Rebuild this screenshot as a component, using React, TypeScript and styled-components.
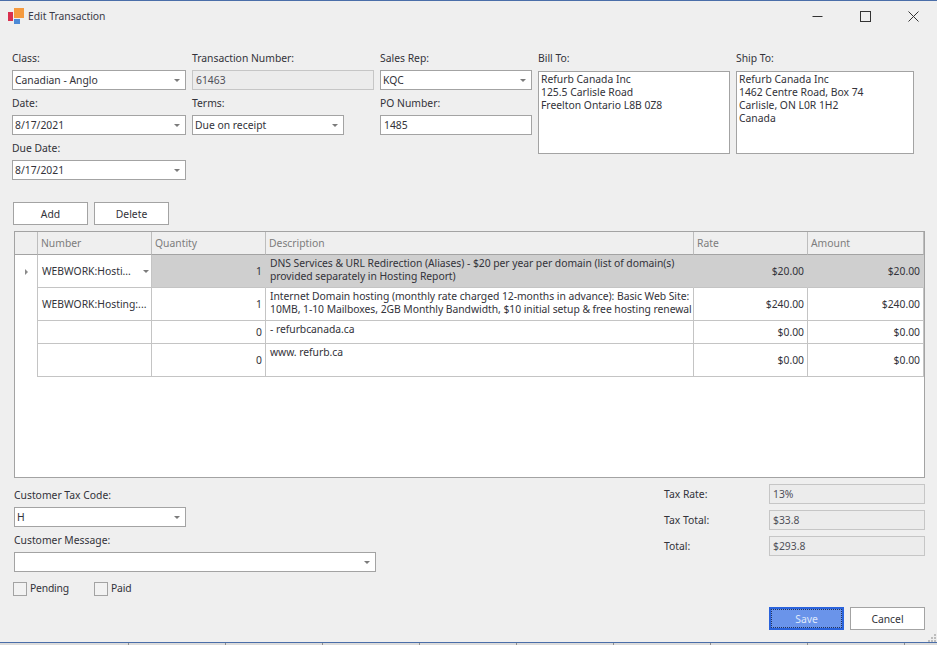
import React from "react";
import styled, { createGlobalStyle } from "styled-components";

const Global = createGlobalStyle`
  html, body { margin: 0; padding: 0; background: #efefef; }
  * { box-sizing: border-box; }
`;

const Window = styled.div`
  width: 937px;
  height: 645px;
  overflow: hidden;
  display: flex;
  flex-direction: column;
  position: relative;
  background: #efefef;
  border-top: 1px solid #4a6ea9;
  font-family: "Noto Sans", Tahoma, sans-serif;
  font-size: 10.35px;
  line-height: 13px;
  color: #33333a;
`;

const TitleBar = styled.header`
  height: 51px;
  display: flex;
  align-items: flex-start;
  padding: 7px 0 0 8px;
  flex: none;
`;

const Title = styled.span`
  margin: 2px 0 0 4px;
  color: #3a3a48;
  flex: 1;
`;

const WinButton = styled.button`
  width: 48px;
  height: 16px;
  padding: 0;
  border: 0;
  background: none;
  display: flex;
  align-items: center;
  justify-content: center;
`;

const WinControls = styled.div`
  display: flex;
`;

const FormRow = styled.section`
  display: flex;
  gap: 6px;
  padding-left: 12px;
  height: 150px;
  flex: none;
`;

const Column = styled.div<{ $w: number }>`
  width: ${(p) => p.$w}px;
  display: flex;
  flex-direction: column;
  gap: 7px;
  flex: none;
`;

const Field = styled.div<{ $labelH?: number }>`
  display: flex;
  flex-direction: column;
  > label {
    height: ${(p) => p.$labelH ?? 18}px;
  }
`;

const FieldLabel = styled.label`
  display: block;
`;

const Combo = styled.div<{ $w?: number }>`
  height: 20px;
  width: ${(p) => (p.$w ? p.$w + "px" : "100%")};
  background: #fff;
  border: 1px solid #a3a3a3;
  display: flex;
  align-items: center;
  padding: 0 5px 0 2px;
  > span { flex: 1; white-space: nowrap; overflow: hidden; }
`;

const Arrow = styled.i`
  display: block;
  width: 0;
  height: 0;
  border-left: 3px solid transparent;
  border-right: 3px solid transparent;
  border-top: 3px solid #7b7b7b;
  flex: none;
`;

const TextBox = styled.div<{ $disabled?: boolean }>`
  height: 20px;
  width: 100%;
  background: ${(p) => (p.$disabled ? "#ececec" : "#fff")};
  border: 1px solid ${(p) => (p.$disabled ? "#c6c6c6" : "#a3a3a3")};
  display: flex;
  align-items: center;
  padding: 0 3px;
  color: ${(p) => (p.$disabled ? "#50505a" : "#33333a")};
`;

const Memo = styled.div`
  height: 83px;
  background: #fff;
  border: 1px solid #a3a3a3;
  padding: 1px 2px 0;
  white-space: pre-line;
`;

const ActionBar = styled.div`
  display: flex;
  gap: 6px;
  padding-left: 13px;
  flex: none;
  height: 29px;
`;

const Btn = styled.button`
  width: 75px;
  height: 23px;
  background: #fff;
  border: 1px solid #a3a3a3;
  font: inherit;
  color: #33333a;
  padding: 1px 0 0;
`;

const Grid = styled.div`
  margin-left: 14px;
  width: 911px;
  height: 247px;
  flex: none;
  background: #fff;
  border: 1px solid #a3a3a3;
  display: grid;
  grid-template-columns: 23px 114px 114px 428px 114px 116px;
  grid-template-rows: 23px 33px 33px 23px 33px;
  align-content: start;
`;

const HeadCell = styled.div`
  background: #efefef;
  border-right: 1px solid #bdbdbd;
  border-bottom: 1px solid #a3a3a3;
  color: #7d7d7d;
  display: flex;
  align-items: center;
  padding-left: 3px;
`;

const Indicator = styled.div`
  border-right: 1px solid #c4c4c4;
  display: flex;
  align-items: center;
  justify-content: center;
  background: #fff;
`;

const Caret = styled.i`
  display: block;
  width: 0;
  height: 0;
  border-top: 3px solid transparent;
  border-bottom: 3px solid transparent;
  border-left: 3px solid #8a8a8a;
`;

const Cell = styled.div<{ $sel?: boolean; $right?: boolean }>`
  background: ${(p) => (p.$sel ? "#cfcfcf" : "#fff")};
  border-right: 1px solid ${(p) => (p.$sel ? "#cfcfcf" : "#c4c4c4")};
  border-bottom: 1px solid #c4c4c4;
  padding: 0 ${(p) => (p.$right ? "3px" : "2px")} 0 4px;
  display: flex;
  align-items: center;
  justify-content: ${(p) => (p.$right ? "flex-end" : "flex-start")};
`;

const DescCell = styled(Cell)<{ $top?: boolean }>`
  white-space: pre;
  letter-spacing: -0.04px;
  align-items: ${(p) => (p.$top ? "flex-start" : "center")};
  padding-top: ${(p) => (p.$top ? "2px" : "0")};
  padding-bottom: ${(p) => (p.$top ? "0" : "2px")};
`;

const NumberText = styled.span`
  flex: 1;
  white-space: nowrap;
`;

const Bottom = styled.section`
  display: flex;
  justify-content: space-between;
  padding: 6px 12px 0 14px;
  height: 129px;
  flex: none;
`;

const LeftStack = styled.div`
  padding-top: 5px;
  display: flex;
  flex-direction: column;
  gap: 7px;
  width: 362px;
`;

const Checks = styled.div`
  display: flex;
  margin-top: 3px;
  margin-left: -1px;
`;

const Check = styled.label`
  width: 81px;
  display: flex;
  align-items: flex-start;
  gap: 3px;
  line-height: 12px;
  letter-spacing: -0.2px;
`;

const Box = styled.i`
  display: block;
  width: 14px;
  height: 14px;
  background: #f2f2f2;
  border: 1px solid #a3a3a3;
`;

const Totals = styled.div`
  display: flex;
  flex-direction: column;
  gap: 6px;
`;

const TotalRow = styled.div`
  display: flex;
  align-items: center;
  > label { width: 105px; }
  > div { width: 156px; }
`;

const Footer = styled.footer`
  display: flex;
  justify-content: flex-end;
  gap: 6px;
  padding-right: 12px;
  flex: none;
`;

const SaveBtn = styled(Btn)`
  background: #6a94ea;
  border: 2px solid #2a63dc;
  color: #dfe8fb;
  outline: 1px dotted #24345c;
  outline-offset: -3px;
`;

const Grip = styled.svg`
  position: absolute;
  right: 0;
  bottom: 2px;
`;

const BackStrip = styled.div`
  position: absolute;
  left: 0;
  right: 0;
  bottom: 0;
  height: 3px;
  border-top: 1px solid #4a6ea9;
  background-color: #dcdcdc;
  background-image: repeating-linear-gradient(
    to right,
    transparent 0,
    transparent 96px,
    #8f8f8f 96px,
    #8f8f8f 97px
  );
  background-position: 32px 0;
`;

const rows = [
  { n: "WEBWORK:Hosti...", q: "1", d: "DNS Services & URL Redirection (Aliases) - $20 per year per domain (list of domain(s)\nprovided separately in Hosting Report)", r: "$20.00", sel: true },
  { n: "WEBWORK:Hosting:...", q: "1", d: "Internet Domain hosting (monthly rate charged 12-months in advance): Basic Web Site:\n10MB, 1-10 Mailboxes, 2GB Monthly Bandwidth, $10 initial setup & free hosting renewal", r: "$240.00" },
  { n: "", q: "0", d: "- refurbcanada.ca", r: "$0.00", top: true },
  { n: "", q: "0", d: "www. refurb.ca", r: "$0.00", top: true },
];

export default function App() {
  return (
    <Window>
      <Global />
      <TitleBar>
        <svg width="16" height="16" viewBox="0 0 16 16" style={{ flex: "none" }}>
          <rect x="0" y="4" width="5" height="9" fill="#d9304f" />
          <rect x="6" y="0" width="10" height="10" fill="#f59a3e" />
          <rect x="6" y="11" width="6" height="5" fill="#4d8ad6" />
        </svg>
        <Title>Edit Transaction</Title>
        <WinControls>
          <WinButton aria-label="Minimize">
            <svg width="11" height="11" viewBox="0 0 11 11"><path d="M0.5 5.5h10" stroke="#333" fill="none" /></svg>
          </WinButton>
          <WinButton aria-label="Maximize">
            <svg width="11" height="11" viewBox="0 0 11 11"><rect x="0.5" y="0.5" width="10" height="10" stroke="#333" fill="none" /></svg>
          </WinButton>
          <WinButton aria-label="Close">
            <svg width="11" height="11" viewBox="0 0 11 11"><path d="M0.5 0.5l10 10M10.5 0.5l-10 10" stroke="#333" fill="none" /></svg>
          </WinButton>
        </WinControls>
      </TitleBar>

      <FormRow>
        <Column $w={174}>
          <Field><FieldLabel>Class:</FieldLabel><Combo><span>Canadian - Anglo</span><Arrow /></Combo></Field>
          <Field><FieldLabel>Date:</FieldLabel><Combo><span>8/17/2021</span><Arrow /></Combo></Field>
          <Field><FieldLabel>Due Date:</FieldLabel><Combo><span>8/17/2021</span><Arrow /></Combo></Field>
        </Column>
        <Column $w={182}>
          <Field><FieldLabel>Transaction Number:</FieldLabel><TextBox $disabled>61463</TextBox></Field>
          <Field><FieldLabel>Terms:</FieldLabel><Combo $w={152}><span>Due on receipt</span><Arrow /></Combo></Field>
        </Column>
        <Column $w={152}>
          <Field><FieldLabel>Sales Rep:</FieldLabel><Combo><span>KQC</span><Arrow /></Combo></Field>
          <Field><FieldLabel>PO Number:</FieldLabel><TextBox>1485</TextBox></Field>
        </Column>
        <Column $w={192}>
          <Field $labelH={19}><FieldLabel>Bill To:</FieldLabel><Memo>{"Refurb Canada Inc\n125.5 Carlisle Road\nFreelton Ontario L8B 0Z8"}</Memo></Field>
        </Column>
        <Column $w={178}>
          <Field $labelH={19}><FieldLabel>Ship To:</FieldLabel><Memo>{"Refurb Canada Inc\n1462 Centre Road, Box 74\nCarlisle, ON L0R 1H2\nCanada"}</Memo></Field>
        </Column>
      </FormRow>

      <ActionBar>
        <Btn>Add</Btn>
        <Btn>Delete</Btn>
      </ActionBar>

      <Grid>
        <HeadCell />
        <HeadCell>Number</HeadCell>
        <HeadCell>Quantity</HeadCell>
        <HeadCell>Description</HeadCell>
        <HeadCell>Rate</HeadCell>
        <HeadCell>Amount</HeadCell>
        {rows.map((r, i) => (
          <React.Fragment key={i}>
            <Indicator>{r.sel && <Caret />}</Indicator>
            <Cell>
              <NumberText>{r.n}</NumberText>
              {r.sel && <Arrow />}
            </Cell>
            <Cell $sel={r.sel} $right>{r.q}</Cell>
            <DescCell $sel={r.sel} $top={r.top}>{r.d}</DescCell>
            <Cell $sel={r.sel} $right>{r.r}</Cell>
            <Cell $sel={r.sel} $right>{r.r}</Cell>
          </React.Fragment>
        ))}
      </Grid>

      <Bottom>
        <LeftStack>
          <Field><FieldLabel>Customer Tax Code:</FieldLabel><Combo $w={172}><span>H</span><Arrow /></Combo></Field>
          <Field><FieldLabel>Customer Message:</FieldLabel><Combo><span /><Arrow /></Combo></Field>
          <Checks>
            <Check><Box />Pending</Check>
            <Check><Box />Paid</Check>
          </Checks>
        </LeftStack>
        <Totals>
          <TotalRow><FieldLabel>Tax Rate:</FieldLabel><TextBox $disabled>13%</TextBox></TotalRow>
          <TotalRow><FieldLabel>Tax Total:</FieldLabel><TextBox $disabled>$33.8</TextBox></TotalRow>
          <TotalRow><FieldLabel>Total:</FieldLabel><TextBox $disabled>$293.8</TextBox></TotalRow>
        </Totals>
      </Bottom>

      <Footer>
        <SaveBtn>Save</SaveBtn>
        <Btn>Cancel</Btn>
      </Footer>

      <Grip width="10" height="10" viewBox="0 0 10 10">
        <g fill="#bdbdbd">
          <rect x="7" y="1" width="2" height="2" />
          <rect x="4" y="4" width="2" height="2" />
          <rect x="7" y="4" width="2" height="2" />
          <rect x="1" y="7" width="2" height="2" />
          <rect x="4" y="7" width="2" height="2" />
          <rect x="7" y="7" width="2" height="2" />
        </g>
      </Grip>
      <BackStrip />
    </Window>
  );
}
